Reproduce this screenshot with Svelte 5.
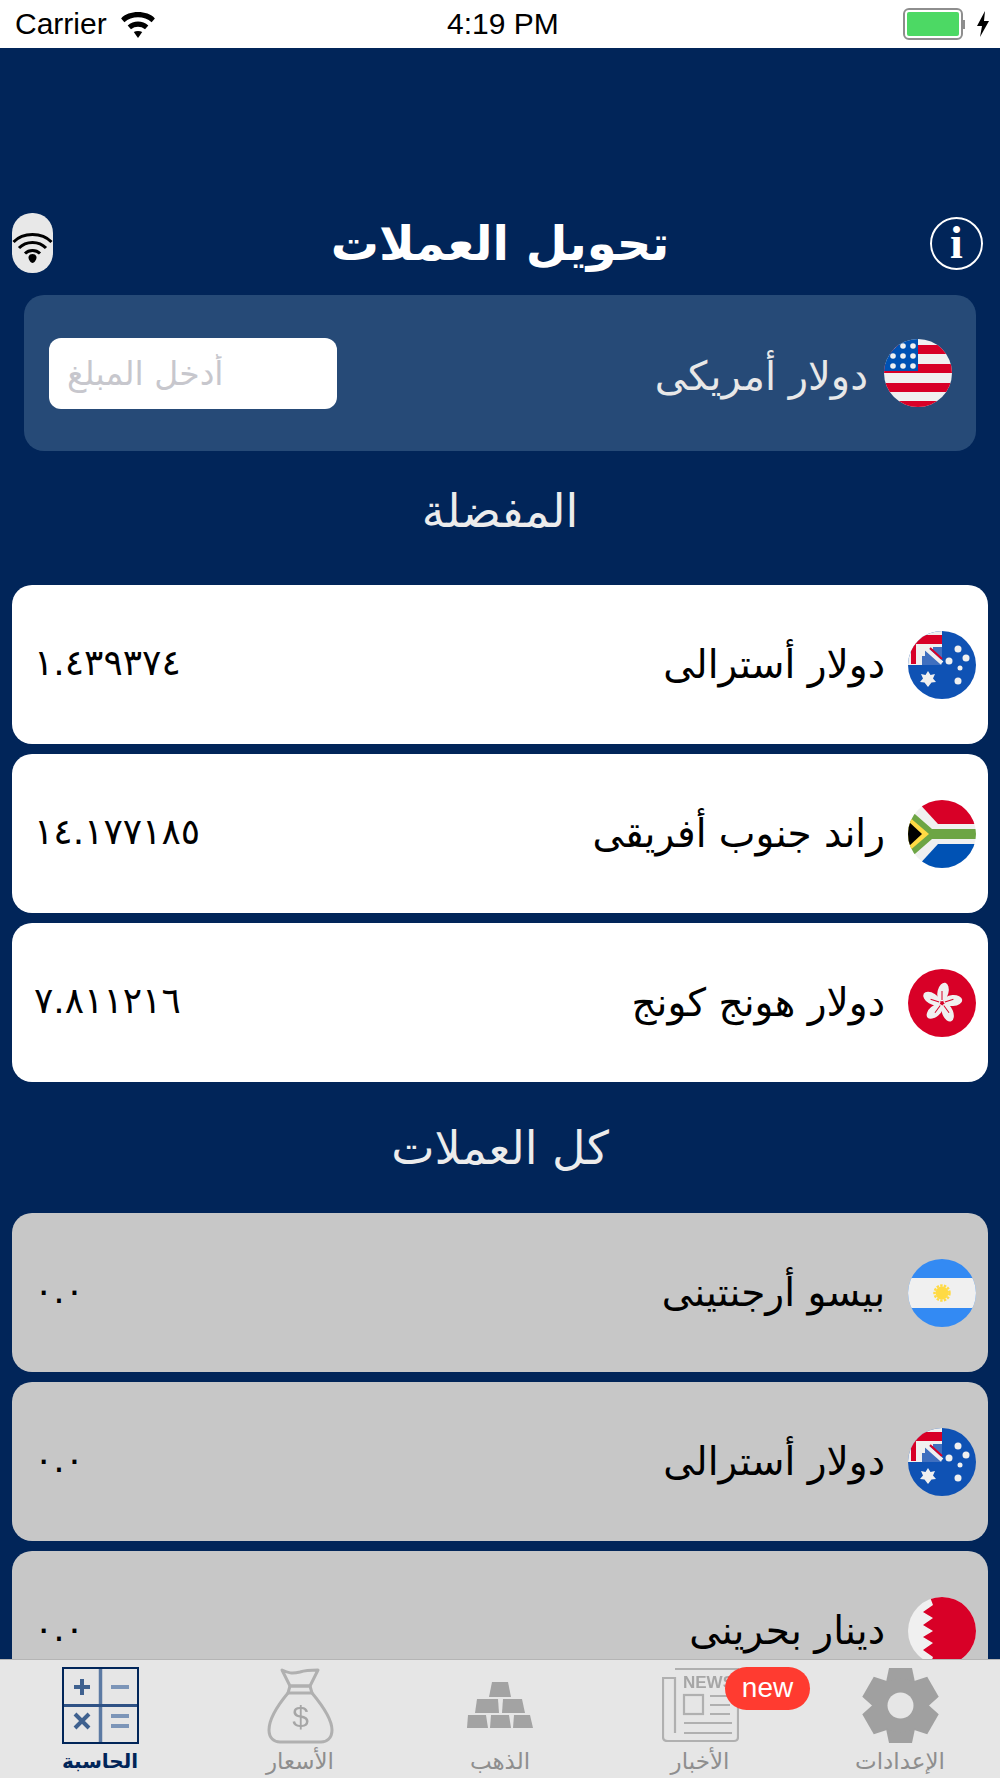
<script>
  const favourites = [
    { flag: "au", name: "دولار أسترالى", value: "١.٤٣٩٣٧٤" },
    { flag: "za", name: "راند جنوب أفريقى", value: "١٤.١٧٧١٨٥" },
    { flag: "hk", name: "دولار هونج كونج", value: "٧.٨١١٢١٦" }
  ];
  const currencies = [
    { flag: "ar", name: "بيسو أرجنتينى", value: "٠.٠" },
    { flag: "au", name: "دولار أسترالى", value: "٠.٠" },
    { flag: "bh", name: "دينار بحرينى", value: "٠.٠" }
  ];
  const tabs = [
    { id: "calc", label: "الحاسبة", active: true },
    { id: "bag", label: "الأسعار" },
    { id: "gold", label: "الذهب" },
    { id: "news", label: "الأخبار", badge: "new" },
    { id: "gear", label: "الإعدادات" }
  ];
  const petals = [0, 72, 144, 216, 288];
  const teeth = [0, 60, 120, 180, 240, 300];
</script>

{#snippet flag(code)}
  <svg class="flag" viewBox="0 0 68 68">
    {#if code === "us"}
      <rect width="68" height="68" fill="#f0f0f0" />
      <rect y="6" width="68" height="9" fill="#d80027" />
      <rect y="25" width="68" height="9" fill="#d80027" />
      <rect y="44" width="68" height="9" fill="#d80027" />
      <rect y="62" width="68" height="6" fill="#d80027" />
      <rect width="34" height="32" fill="#0052b4" />
      {#each [7, 17, 27] as y}
        {#each [9, 19, 29] as x}
          <circle cx={x} cy={y} r="2.800" fill="#f0f0f0" />
        {/each}
      {/each}
    {:else if code === "au"}
      <rect width="68" height="68" fill="#0f52b4" />
      <rect x="0" y="0" width="34" height="34" fill="#f0f0f0" />
      <rect x="6" y="4" width="28" height="9" fill="#d80027" />
      <rect x="3" y="4" width="5" height="29" fill="#d80027" />
      <path d="M14 16 H34 V34 H14 Z" fill="#3f6fbf" />
      <path d="M16 16 L34 32 M15 25 V16 H25" stroke="#f0f0f0" stroke-width="4" fill="none" />
      <path d="M22 17 L34 28" stroke="#d80027" stroke-width="2" />
      <circle cx="50" cy="18" r="3.500" fill="#f0f0f0" />
      <circle cx="41" cy="30" r="3.500" fill="#f0f0f0" />
      <circle cx="58" cy="27" r="3.500" fill="#f0f0f0" />
      <circle cx="52" cy="37" r="2.500" fill="#f0f0f0" />
      <circle cx="50" cy="50" r="3.500" fill="#f0f0f0" />
      <path d="M20 40 L22.500 44 L27 43 L25 47.500 L28 51 L23.500 51.500 L20 56 L16.500 51.500 L12 51 L15 47.500 L13 43 L17.500 44 Z" fill="#f0f0f0" />
    {:else if code === "za"}
      <rect width="68" height="68" fill="#f0f0f0" />
      <path d="M8 0 H68 V24 H30 Z" fill="#d80027" />
      <path d="M8 68 H68 V44 H30 Z" fill="#0052b4" />
      <path d="M0 8 L24 29 H68 V39 H24 L0 60 Z" fill="#6da544" />
      <path d="M0 16 L21 34 L0 52 Z" fill="#ffda44" />
      <path d="M0 21 L14 34 L0 47 Z" fill="#000" />
    {:else if code === "hk"}
      <rect width="68" height="68" fill="#d80027" />
      {#each petals as angle}
        <g transform="rotate({angle} 34 34)">
          <ellipse cx="35" cy="23" rx="5.500" ry="9.500" fill="#f0f0f0" transform="rotate(14 35 23)" />
          <path d="M34 31 L34 22" stroke="#d80027" stroke-width="1" />
        </g>
      {/each}
    {:else if code === "ar"}
      <rect width="68" height="68" fill="#338af3" />
      <rect y="19" width="68" height="30" fill="#f0f0f0" />
      <circle cx="34" cy="34" r="6.500" fill="#ffda44" />
      <circle cx="34" cy="34" r="7.500" fill="none" stroke="#ffda44" stroke-width="2.500" stroke-dasharray="2.400 1.300" />
    {:else if code === "bh"}
      <rect width="68" height="68" fill="#f0f0f0" />
      <path d="M22 0 H68 V68 H22 L25 60 L15 53 L25 46 L15 40 L25 34 L15 28 L25 21 L15 15 L25 8 Z" fill="#d80027" />
    {/if}
  </svg>
{/snippet}

{#snippet row(item, dim)}
  <li class="row" class:dim dir="rtl">
    {@render flag(item.flag)}
    <span class="name">{item.name}</span>
    <span class="value" dir="ltr">{item.value}</span>
  </li>
{/snippet}

{#snippet tabIcon(id)}
  {#if id === "calc"}
    <svg class="icon" viewBox="0 0 77 77">
      <rect x="1" y="1" width="75" height="75" fill="none" stroke="#012559" stroke-width="2" />
      <path d="M38.500 2 V75" stroke="#5c7aa3" stroke-width="3.500" />
      <path d="M2 38.500 H75" stroke="#2f5285" stroke-width="3" />
      <path d="M20 12 V28 M12 20 H28" stroke="#3f618f" stroke-width="4" />
      <path d="M49 20 H67" stroke="#7c95b8" stroke-width="4" />
      <path d="M13 47 L27 61 M27 47 L13 61" stroke="#3f618f" stroke-width="4" />
      <path d="M49 49 H67 M49 59 H67" stroke="#7c95b8" stroke-width="4" />
    </svg>
  {:else if id === "bag"}
    <svg class="icon" viewBox="0 0 77 77">
      <g fill="none" stroke="#b0b0b0" stroke-width="3" stroke-linejoin="round">
        <path d="M20 3 C26 6 30 7 38 5 C44 3 50 3 56 3 L48 19 H28 Z" />
        <path d="M28 19 L48 19 L50 26 H26 Z" />
        <path d="M26 26 C16 38 7 52 7 63 C7 71 12 75 18 75 H59 C65 75 70 71 70 63 C70 52 60 38 50 26" />
      </g>
      <text class="dollar" x="38.500" y="60" text-anchor="middle">$</text>
    </svg>
  {:else if id === "gold"}
    <svg class="icon" viewBox="0 0 77 77">
      <g fill="#a3a3a3">
        <path d="M30 15 H46 L49 30 H27 Z" />
        <path d="M15 32 L36 32 L37 46 H13 Z" />
        <path d="M41 32 H60 L63 46 H40 Z" />
        <path d="M6 48 H24 L26 61 H5 Z" />
        <path d="M29 48 H47 L49 61 H28 Z" />
        <path d="M52 48 H68 L71 61 H51 Z" />
      </g>
    </svg>
  {:else if id === "news"}
    <svg class="icon" viewBox="0 0 77 77">
      <g fill="none" stroke="#b0b0b0" stroke-width="2.200">
        <path d="M13 2 H76 V70 C76 73 75 74 72 74 H6 C3 74 1 73 1 70 V11 H13 V66" />
        <rect x="22" y="28" width="19" height="19" />
        <path d="M48 29 H68 M48 38 H68 M48 47 H68 M22 56 H70 M22 66 H70" />
      </g>
      <text class="news-word" x="21" y="21">NEWS</text>
    </svg>
  {:else if id === "gear"}
    <svg class="icon" viewBox="0 0 77 77">
      <g fill="#a0a0a0">
        {#each teeth as angle}
          <path d="M27 1 H50 L54 20 H23 Z" transform="rotate({angle} 38.500 38.500)" />
        {/each}
        <circle cx="38.500" cy="38.500" r="27" />
      </g>
      <circle cx="38.500" cy="38.500" r="13" fill="#e6e6e6" />
    </svg>
  {/if}
{/snippet}

<div class="screen">
  <div class="status">
    <div class="status-left">
      <span>Carrier</span>
      <svg class="status-wifi" viewBox="0 0 40 32">
        <path d="M2 10 C10 1 30 1 38 10 L34.500 14 C27 7 13 7 5.500 14 Z" />
        <path d="M9 17.500 C15 12 25 12 31 17.500 L27.500 21.500 C23 18 17 18 12.500 21.500 Z" />
        <path d="M15.500 24.500 C18 23 22 23 24.500 24.500 L20 31 Z" />
      </svg>
    </div>
    <span class="time">4:19 PM</span>
    <div class="status-right">
      <div class="battery"><div class="charge"></div></div>
      <div class="nub"></div>
      <svg class="bolt" viewBox="0 0 14 26"><path d="M9 0 L1 15 H6 L4 26 L13 10 H8 Z" /></svg>
    </div>
  </div>

  <main>
    <header>
      <button class="net" aria-label="network">
        <svg viewBox="0 0 41 32">
          <g fill="none" stroke="#000" stroke-width="3">
            <path d="M1.500 11 C11 1 30 1 39.500 11" />
            <path d="M7 17 C14 9.500 27 9.500 34 17" />
            <path d="M13 22.500 C17 18.500 24 18.500 28 22.500" />
          </g>
          <path d="M20.500 23 C23.500 23 24.500 25 24.500 26.500 C24.500 29 22 32 20.500 32 C19 32 16.500 29 16.500 26.500 C16.500 25 17.500 23 20.500 23 Z" />
        </svg>
      </button>
      <h1 dir="rtl">تحويل العملات</h1>
      <button class="info">i</button>
    </header>

    <section class="base" dir="rtl">
      {@render flag("us")}
      <span class="base-name">دولار أمريكى</span>
      <input dir="ltr" type="text" placeholder="أدخل المبلغ" />
    </section>

    <h2 class="fav-title" dir="rtl">المفضلة</h2>
    <ul>
      {#each favourites as item}
        {@render row(item, false)}
      {/each}
    </ul>

    <h2 class="all-title" dir="rtl">كل العملات</h2>
    <ul>
      {#each currencies as item}
        {@render row(item, true)}
      {/each}
    </ul>
  </main>

  <nav>
    {#each tabs as tab}
      <div class="tab" class:active={tab.active}>
        {@render tabIcon(tab.id)}
        <span class="label" dir="rtl">{tab.label}</span>
        {#if tab.badge}
          <span class="badge">{tab.badge}</span>
        {/if}
      </div>
    {/each}
  </nav>
</div>

<style>
  :global(body) {
    margin: 0;
    background: #012559;
  }

  .screen {
    width: 1000px;
    height: 1778px;
    display: flex;
    flex-direction: column;
    overflow: hidden;
    font-family: "DejaVu Sans", sans-serif;
  }

  .status {
    height: 48px;
    flex: none;
    background: #fff;
    display: flex;
    align-items: center;
    justify-content: space-between;
    padding: 0 10px 0 15px;
    font-family: "Liberation Sans", sans-serif;
    font-size: 30px;
    color: #000;
    position: relative;
  }

  .status-left {
    display: flex;
    align-items: center;
    gap: 12px;
  }

  .status-wifi {
    width: 38px;
    height: 30px;
  }

  .time {
    position: absolute;
    left: 447px;
  }

  .status-right {
    display: flex;
    align-items: center;
  }

  .battery {
    width: 52px;
    height: 24px;
    border: 2px solid #8e8e8e;
    border-radius: 6px;
    padding: 2px;
    box-sizing: content-box;
  }

  .charge {
    width: 100%;
    height: 100%;
    background: #4cd964;
    border-radius: 2px;
  }

  .nub {
    width: 2px;
    height: 9px;
    background: #8e8e8e;
    margin-right: 11px;
  }

  .bolt {
    width: 14px;
    height: 26px;
  }

  main {
    flex: 1;
    min-height: 0;
    overflow: hidden;
    background: #012559;
    padding: 165px 12px 0;
  }

  header {
    height: 60px;
    display: grid;
    grid-template-columns: 1fr auto 1fr;
    align-items: center;
    padding-right: 5px;
  }

  h1 {
    margin: 0 0 0 5px;
    color: #fff;
    font-size: 48px;
    font-weight: 700;
  }

  .net {
    width: 41px;
    height: 60px;
    border: none;
    padding: 0;
    background: #e8e8e8;
    border-radius: 20px;
    display: flex;
    align-items: center;
    justify-content: center;
  }

  .net svg {
    width: 41px;
    height: 32px;
    margin-top: 8px;
  }

  .info {
    justify-self: end;
    width: 53px;
    height: 53px;
    border: 2px solid #fff;
    border-radius: 50%;
    background: none;
    color: #fff;
    padding: 0;
    font-family: "Liberation Serif", serif;
    font-size: 46px;
    font-weight: 700;
    line-height: 48px;
  }

  .base {
    margin: 22px 12px 0;
    height: 156px;
    box-sizing: border-box;
    background: #264a77;
    border-radius: 20px;
    padding: 0 24px 0 25px;
    display: flex;
    align-items: center;
  }

  .flag {
    width: 68px;
    height: 68px;
    flex: none;
    border-radius: 50%;
    display: block;
  }

  .base-name {
    margin-right: 16px;
    padding-top: 6px;
    font-size: 40px;
    color: #e8e8e8;
    flex: 1;
  }

  input {
    width: 288px;
    height: 71px;
    box-sizing: border-box;
    border: none;
    outline: none;
    border-radius: 12px;
    padding: 0 18px;
    background: #fff;
    font-family: inherit;
    font-size: 33px;
    text-align: left;
  }

  input::placeholder {
    color: #c7c7cd;
  }

  h2 {
    margin: 0;
    color: #ececec;
    font-size: 46px;
    font-weight: 400;
    text-align: center;
    display: flex;
    align-items: center;
    justify-content: center;
  }

  .fav-title {
    height: 134px;
    box-sizing: border-box;
    padding-bottom: 14px;
  }

  .all-title {
    height: 131px;
  }

  ul {
    list-style: none;
    margin: 0;
    padding: 0;
    display: flex;
    flex-direction: column;
    gap: 10px;
  }

  .row {
    height: 159px;
    box-sizing: border-box;
    background: #fff;
    border-radius: 20px;
    display: flex;
    align-items: center;
    padding: 0 12px 0 22px;
    color: #000;
  }

  .row.dim {
    background: #c7c7c7;
  }

  .name {
    margin-right: 23px;
    font-size: 39px;
  }

  .value {
    margin-right: auto;
    font-size: 36px;
    padding-bottom: 5px;
  }

  nav {
    height: 119px;
    flex: none;
    box-sizing: border-box;
    background: #e6e6e6;
    border-top: 1px solid #b5b5b5;
    display: flex;
    padding-top: 7px;
  }

  .tab {
    flex: 1;
    display: flex;
    flex-direction: column;
    align-items: center;
    position: relative;
    color: #8e8e8e;
    font-size: 23px;
  }

  .tab.active {
    color: #012559;
    font-weight: 700;
    font-size: 20px;
  }

  .icon {
    width: 77px;
    height: 77px;
    display: block;
    filter: blur(0.6px);
  }

  .dollar {
    font-family: "Liberation Sans", sans-serif;
    font-size: 30px;
    fill: #a6a6a6;
  }

  .news-word {
    font-family: "Liberation Sans", sans-serif;
    font-size: 17px;
    font-weight: 700;
    fill: #a6a6a6;
  }

  .label {
    margin-top: 3px;
    line-height: 28px;
  }

  .badge {
    position: absolute;
    left: 125px;
    top: 0;
    width: 85px;
    height: 43px;
    border-radius: 22px;
    background: #ff3b30;
    color: #fff;
    font-family: "Liberation Sans", sans-serif;
    font-size: 28px;
    line-height: 41px;
    text-align: center;
  }
</style>
